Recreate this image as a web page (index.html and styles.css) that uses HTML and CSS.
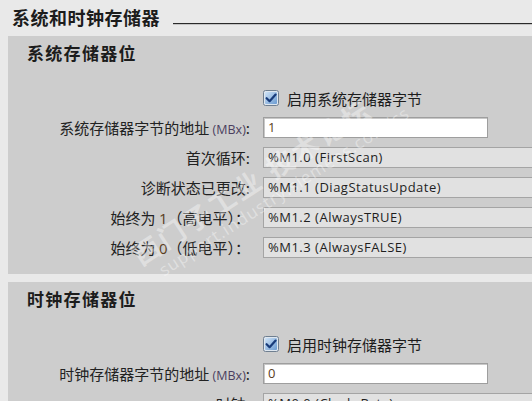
FILE: index.html
```html
<!DOCTYPE html>
<html lang="zh-CN">
<head>
<meta charset="utf-8">
<title>系统和时钟存储器</title>
<link rel="stylesheet" href="styles.css">
</head>
<body>
<div class="page">
  <div class="heading">
    <h1 class="heading-text">系统和时钟存储器</h1>
    <div class="heading-line"></div>
  </div>

  <section class="panel">
    <h2 class="panel-title">系统存储器位</h2>
    <div class="form">
      <div class="label"></div>
      <label class="check">
        <svg class="checkbox" width="16" height="16" viewBox="0 0 16 16">
          <defs>
            <linearGradient id="cb1" x1="0" y1="0" x2="1" y2="1">
              <stop offset="0" stop-color="#cfe3f7"/>
              <stop offset="1" stop-color="#6b9bd1"/>
            </linearGradient>
          </defs>
          <rect x="0.5" y="0.5" width="15" height="15" rx="2" fill="#dfe7ef" stroke="#6f7f90"/>
          <rect x="2" y="2" width="12" height="12" rx="1" fill="url(#cb1)"/>
          <path d="M3.6 8.2 L6.6 11.2 L12.6 4.6" fill="none" stroke="#183b7a" stroke-width="2.2" stroke-linecap="round" stroke-linejoin="round"/>
        </svg>
        <span class="check-text">启用系统存储器字节</span>
      </label>

      <div class="label">系统存储器字节的地址 <span class="unit">(MBx)</span>:</div>
      <div class="input"><span class="num">1</span></div>

      <div class="label">首次循环:</div>
      <div class="field">%M1.0 (FirstScan)</div>

      <div class="label">诊断状态已更改:</div>
      <div class="field">%M1.1 (DiagStatusUpdate)</div>

      <div class="label">始终为 <span class="num">1</span>（高电平）：</div>
      <div class="field">%M1.2 (AlwaysTRUE)</div>

      <div class="label">始终为 <span class="num">0</span>（低电平）：</div>
      <div class="field">%M1.3 (AlwaysFALSE)</div>
    </div>
  </section>

  <section class="panel">
    <h2 class="panel-title">时钟存储器位</h2>
    <div class="form">
      <div class="label"></div>
      <label class="check">
        <svg class="checkbox" width="16" height="16" viewBox="0 0 16 16">
          <defs>
            <linearGradient id="cb2" x1="0" y1="0" x2="1" y2="1">
              <stop offset="0" stop-color="#cfe3f7"/>
              <stop offset="1" stop-color="#6b9bd1"/>
            </linearGradient>
          </defs>
          <rect x="0.5" y="0.5" width="15" height="15" rx="2" fill="#dfe7ef" stroke="#6f7f90"/>
          <rect x="2" y="2" width="12" height="12" rx="1" fill="url(#cb2)"/>
          <path d="M3.6 8.2 L6.6 11.2 L12.6 4.6" fill="none" stroke="#183b7a" stroke-width="2.2" stroke-linecap="round" stroke-linejoin="round"/>
        </svg>
        <span class="check-text">启用时钟存储器字节</span>
      </label>

      <div class="label">时钟存储器字节的地址 <span class="unit">(MBx)</span>:</div>
      <div class="input"><span class="num">0</span></div>

      <div class="label">时钟:</div>
      <div class="field">%M0.0 (Clock_Byte)</div>
    </div>
  </section>

  <div class="watermark">
    <div class="wm-big">西门子工业 技术论坛</div>
    <div class="wm-small">support.industry.siemens.com/cs</div>
  </div>
</div>
</body>
</html>
```

FILE: styles.css
```css
html, body {
  margin: 0;
  padding: 0;
}
body {
  background: #e9e9e9;
  font-family: "Noto Sans CJK SC", "Noto Sans", sans-serif;
  color: #1c1c1c;
  width: 532px;
  height: 401px;
  overflow: hidden;
}
.page {
  position: relative;
  height: 401px;
  overflow: hidden;
}
.heading {
  display: flex;
  align-items: flex-start;
  height: 36px;
  padding-left: 12px;
}
.heading-text {
  margin: 0;
  font-size: 18px;
  font-weight: 700;
  line-height: 34px;
  letter-spacing: 0.5px;
}
.heading-line {
  flex: 1;
  height: 1px;
  background: #2a2a2a;
  margin-left: 13px;
  margin-top: 23px;
  border-bottom: 1px solid #c4c4c4;
}
.panel {
  margin-left: 8px;
  background: #cdcdcd;
  padding-bottom: 16px;
  margin-bottom: 8px;
  overflow: hidden;
}
.panel-title {
  margin: 0;
  height: 34px;
  line-height: 34px;
  padding-left: 19px;
  font-size: 17px;
  font-weight: 700;
  letter-spacing: 1.3px;
}
.form {
  display: grid;
  grid-template-columns: 242px 300px;
  column-gap: 13px;
  row-gap: 9px;
  grid-auto-rows: 21px;
  margin-top: 17px;
}
.form > .check {
  height: 22px;
}
.label {
  text-align: right;
  font-size: 15px;
  line-height: 21px;
  white-space: nowrap;
  color: #222;
}
.unit {
  font-family: "Open Sans", sans-serif;
  font-size: 12.5px;
  color: #4b3f5f;
}
.num {
  font-family: "Open Sans", sans-serif;
  color: #5a3d22;
}
.check {
  display: flex;
  align-items: center;
  gap: 8px;
}
.checkbox {
  display: block;
  flex: none;
}
.check-text {
  font-size: 15px;
  line-height: 21px;
}
.input {
  width: 219px;
  height: 19px;
  background: #fff;
  border: 1px solid #9e9e9e;
  box-shadow: inset 1px 1px 0 #c8c8c8;
  padding-left: 4px;
  font-family: "Open Sans", sans-serif;
  font-size: 13px;
  line-height: 19px;
  box-sizing: content-box;
}
.field {
  height: 19px;
  background: #e1e1e1;
  border: 1px solid #a4a4a4;
  border-right: none;
  padding-left: 4px;
  font-family: "Open Sans", sans-serif;
  font-size: 13px;
  letter-spacing: 0.5px;
  line-height: 19px;
  color: #1e1e1e;
  white-space: nowrap;
}
.watermark {
  position: absolute;
  left: 126px;
  top: 244px;
  transform: rotate(-33deg);
  transform-origin: 0 0;
  color: rgba(255, 255, 255, 0.38);
  pointer-events: none;
}
.wm-big {
  font-size: 27px;
  font-weight: 700;
  letter-spacing: 3px;
  white-space: nowrap;
  line-height: 32px;
}
.wm-small {
  font-family: "Open Sans", sans-serif;
  font-size: 17px;
  letter-spacing: 1px;
  white-space: nowrap;
  margin-left: 14px;
  line-height: 20px;
}
```
